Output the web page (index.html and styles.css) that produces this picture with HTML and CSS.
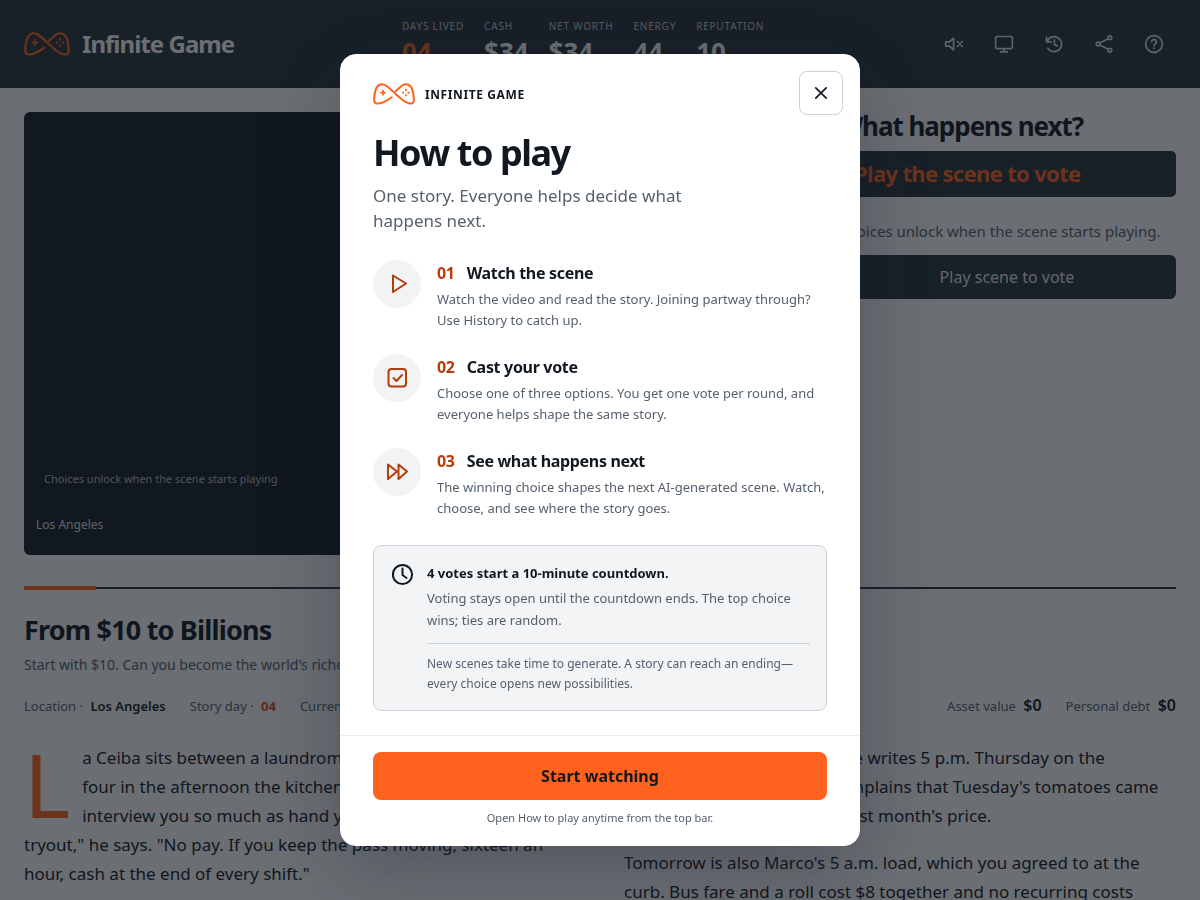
FILE: index.html
```
<!DOCTYPE html>
<html lang="en">
<head>
  <meta charset="UTF-8">
  <meta name="viewport" content="width=device-width, initial-scale=1.0">
  <title>Infinite Game</title>
  <link rel="stylesheet" href="styles.css">
</head>
<body>
  <svg class="sprite" width="0" height="0" aria-hidden="true">
    <symbol id="logo" viewBox="0 0 46 24">
      <g fill="none" stroke="currentColor" stroke-width="2.200" stroke-linecap="round" stroke-linejoin="round">
        <path d="M20.500 15.500C15 19.500 9.500 22.500 5 22.500C1.800 22.500 1 20.500 1.300 16.500C1.700 11 3 6 5 3.500C7.500 0.800 11.500 0.800 14.500 3C20 7 26 13.500 31 17.500C35 20.800 38.500 22.500 41 22.500C44.200 22.500 45 20.500 44.700 16.500C44.300 11 43 6 41 3.500C38.500 0.800 34.500 0.800 31.500 3L25 8.800"/>
        <path d="M11 8v5M8.500 10.500h5" stroke-width="1.800"/>
      </g>
      <g fill="currentColor">
        <circle cx="36" cy="7.500" r="1.200"/><circle cx="36" cy="13.500" r="1.200"/>
        <circle cx="33" cy="10.500" r="1.200"/><circle cx="39" cy="10.500" r="1.200"/>
      </g>
    </symbol>
  </svg>

  <header class="topbar">
    <a class="brand" href="#">
      <svg class="brand-logo" width="46" height="24"><use href="#logo"/></svg>
      <span>Infinite Game</span>
    </a>
    <dl class="stats">
      <div><dt>Days lived</dt><dd class="accent">04</dd></div>
      <div><dt>Cash</dt><dd>$34</dd></div>
      <div><dt>Net worth</dt><dd>$34</dd></div>
      <div><dt>Energy</dt><dd>44</dd></div>
      <div><dt>Reputation</dt><dd>10</dd></div>
    </dl>
    <nav class="tools" aria-label="Tools">
      <button type="button" aria-label="Unmute">
        <svg viewBox="0 0 24 24"><path d="M2 9.500v5h4.500l5 4.500V5l-5 4.500zM16 9l6 6M22 9l-6 6"/></svg>
      </button>
      <button type="button" aria-label="Theater mode">
        <svg viewBox="0 0 24 24"><rect x="2" y="3" width="20" height="14.500" rx="1.500"/><path d="M12 17.500v4M8 21.500h8"/></svg>
      </button>
      <button type="button" aria-label="History">
        <svg viewBox="0 0 24 24"><path d="M3 4v5.500h5.500M3.500 9.500a9 9 0 1 1 1 7.500M12.500 7v5.500l3.500 2"/></svg>
      </button>
      <button type="button" aria-label="Share">
        <svg viewBox="0 0 24 24"><circle cx="19" cy="4.500" r="2.300"/><circle cx="5" cy="12" r="2.300"/><circle cx="19" cy="19.500" r="2.300"/><path d="M7 10.800l10-5.200M7 13.200l10 5.200"/></svg>
      </button>
      <button type="button" aria-label="How to play">
        <svg viewBox="0 0 24 24"><circle cx="12" cy="12" r="10"/><path d="M9.300 9.200a2.800 2.800 0 1 1 4.200 2.500c-1 .600-1.500 1.100-1.500 2.300M12 17v.300"/></svg>
      </button>
    </nav>
  </header>

  <main class="page">
    <div class="stage">
      <section class="video" aria-label="Scene">
        <p class="video-hint">Choices unlock when the scene starts playing</p>
        <p class="video-place">Los Angeles</p>
      </section>
      <aside class="vote">
        <h2>What happens next?</h2>
        <p class="vote-status">Play the scene to vote</p>
        <p class="vote-hint">Choices unlock when the scene starts playing.</p>
        <button class="vote-play" type="button">Play scene to vote</button>
      </aside>
    </div>

    <section class="story">
      <div class="rule"></div>
      <h1>From $10 to Billions</h1>
      <p class="tagline">Start with $10. Can you become the world's richest person?</p>
      <div class="meta">
        <span>Location · <b>Los Angeles</b></span>
        <span>Story day · <b class="accent">04</b></span>
        <span>Current job · <b>None</b></span>
        <span class="money push">Asset value <b>$0</b></span>
        <span class="money">Personal debt <b>$0</b></span>
      </div>
      <div class="prose">
        <div>
          <p class="lead">La Ceiba sits between a laundromat and a tire shop, and by four in the afternoon the kitchen is already loud. They don't interview you so much as hand you an apron. "This is the tryout," he says. "No pay. If you keep the pass moving, sixteen an hour, cash at the end of every shift."</p>
        </div>
        <div>
          <p>At the back of an order slip he writes 5 p.m. Thursday on the calendar margin, then he complains that Tuesday's tomatoes came bruised, and again billed at last month's price.</p>
          <p>Tomorrow is also Marco's 5 a.m. load, which you agreed to at the curb. Bus fare and a roll cost $8 together and no recurring costs through Friday.</p>
        </div>
      </div>
    </section>
  </main>

  <div class="overlay">
    <div class="modal" role="dialog" aria-modal="true" aria-labelledby="howto-title">
      <button class="close" type="button" aria-label="Close">
        <svg width="20" height="20" viewBox="0 0 20 20"><path d="M4.800 4.800l10.400 10.400M15.200 4.800L4.800 15.200"/></svg>
      </button>
      <div class="modal-body">
        <div class="modal-brand">
          <svg class="modal-logo" width="42" height="22"><use href="#logo"/></svg>
          <span>Infinite Game</span>
        </div>
        <h2 id="howto-title">How to play</h2>
        <p class="intro">One story. Everyone helps decide what happens next.</p>

        <ol class="steps">
          <li>
            <span class="step-icon"><svg viewBox="0 0 24 24"><path d="M8 3.500l13 8-13 8.500z"/></svg></span>
            <div>
              <h3><span>01</span>Watch the scene</h3>
              <p>Watch the video and read the story. Joining partway through? Use History to catch up.</p>
            </div>
          </li>
          <li>
            <span class="step-icon"><svg viewBox="0 0 24 24"><rect x="3.500" y="3" width="17.500" height="17.500" rx="3"/><path d="M8.500 12l3 3 5.500-6"/></svg></span>
            <div>
              <h3><span>02</span>Cast your vote</h3>
              <p>Choose one of three options. You get one vote per round, and everyone helps shape the same story.</p>
            </div>
          </li>
          <li>
            <span class="step-icon"><svg viewBox="0 0 24 24"><path d="M3 4.500l9 7-9 7.500zM13.500 4.500l8.500 7-8.500 7.500z"/></svg></span>
            <div>
              <h3><span>03</span>See what happens next</h3>
              <p>The winning choice shapes the next AI-generated scene. Watch, choose, and see where the story goes.</p>
            </div>
          </li>
        </ol>

        <div class="note">
          <svg width="24" height="24" viewBox="0 0 24 24"><circle cx="12.500" cy="12.500" r="9.600"/><path d="M12.500 6.500v6.500l4 3"/></svg>
          <div>
            <strong>4 votes start a 10-minute countdown.</strong>
            <p>Voting stays open until the countdown ends. The top choice wins; ties are random.</p>
            <p class="fine">New scenes take time to generate. A story can reach an ending—every choice opens new possibilities.</p>
          </div>
        </div>
      </div>
      <footer class="modal-foot">
        <button class="start" type="button">Start watching</button>
        <p>Open How to play anytime from the top bar.</p>
      </footer>
    </div>
  </div>
</body>
</html>
```

FILE: styles.css
```
:root {
  --ink: #111820;
  --slate: #27323a;
  --muted: #56616e;
  --orange: #ff621c;
  --rust: #b63c0c;
}

* { box-sizing: border-box; }

body {
  margin: 0;
  height: 100vh;
  overflow: hidden;
  background: #fff;
  color: var(--ink);
  font-family: "Noto Sans", sans-serif;
  font-size: 16px;
}

h1, h2, h3, p, dl, dd, ol { margin: 0; padding: 0; }
button { font: inherit; cursor: pointer; }
.accent { color: var(--orange); }
.sprite { position: absolute; }

/* top bar */
.topbar {
  display: flex;
  align-items: center;
  justify-content: space-between;
  height: 88px;
  padding: 0 24px;
  background: var(--slate);
  color: #fff;
}
.brand {
  display: flex;
  align-items: center;
  gap: 12px;
  color: #fff;
  font-size: 24px;
  font-weight: 700;
  line-height: 32px;
  letter-spacing: -0.04em;
  text-decoration: none;
}
.brand-logo, .modal-logo { color: var(--orange); }
.stats { display: flex; gap: 20px; }
.stats dt {
  color: #c3c8ce;
  font-size: 10px;
  line-height: 16px;
  letter-spacing: 0.08em;
  text-transform: uppercase;
}
.stats dd { font-size: 26px; font-weight: 700; line-height: 36px; }
.tools { display: flex; gap: 6px; }
.tools button {
  display: grid;
  place-items: center;
  width: 44px;
  height: 44px;
  padding: 0;
  border: 0;
  background: none;
  color: #dfe2e5;
}
.tools svg {
  width: 20px;
  height: 20px;
  fill: none;
  stroke: currentColor;
  stroke-width: 2;
  stroke-linecap: round;
  stroke-linejoin: round;
}

/* video and vote panel */
.page { padding: 24px; }
.stage { display: grid; grid-template-columns: 1fr 338px; gap: 26px; }
.video {
  display: flex;
  flex-direction: column;
  justify-content: flex-end;
  aspect-ratio: 16 / 9;
  padding: 20px 12px;
  border-radius: 6px;
  background: #151d25;
  color: #dfe2e5;
}
.video-hint { padding: 0 8px; margin-bottom: 28px; font-size: 11px; line-height: 16px; color: #b5bac0; }
.video-place { font-size: 12px; line-height: 20px; }
.vote h2 { font-size: 26px; line-height: 28px; letter-spacing: -0.04em; margin-bottom: 11px; }
.vote-status {
  padding: 0 16px 2px;
  border-radius: 5px;
  background: var(--slate);
  color: var(--orange);
  font-size: 22px;
  font-weight: 700;
  line-height: 44px;
  letter-spacing: -0.03em;
}
.vote-hint { margin: 22px 0 12px; color: var(--muted); font-size: 15px; line-height: 24px; }
.vote-play {
  width: 100%;
  height: 44px;
  border: 0;
  border-radius: 6px;
  background: var(--slate);
  color: #e6e8ea;
}

/* story */
.story { margin-top: 31px; }
.rule {
  display: flex;
  align-items: center;
  height: 4px;
  background: linear-gradient(var(--slate), var(--slate)) center / 100% 2px no-repeat;
}
.rule::before { content: ""; width: 72px; height: 4px; background: var(--orange); }
.story h1 { margin-top: 22px; font-size: 27px; line-height: 36px; letter-spacing: -0.03em; }
.tagline { margin-top: 6px; color: var(--muted); font-size: 14px; line-height: 22px; }
.meta {
  display: flex;
  align-items: baseline;
  gap: 24px;
  margin-top: 17px;
  color: var(--muted);
  font-size: 13px;
  line-height: 24px;
}
.meta b { margin-left: 4px; color: var(--ink); font-weight: 600; }
.meta b.accent { color: #e04e10; font-weight: 700; }
.meta .money b { font-size: 16px; }
.push { margin-left: auto; }
.prose {
  display: grid;
  grid-template-columns: 1fr 1fr;
  gap: 48px;
  margin-top: 25px;
  font-size: 17px;
  line-height: 29px;
}
.prose p + p { margin-top: 18px; }
.lead::first-letter {
  float: left;
  margin: 5px 12px 0 0;
  color: var(--orange);
  font-size: 88px;
  font-weight: 400;
  line-height: 72px;
}

/* how to play dialog */
.overlay {
  position: fixed;
  inset: 0;
  display: grid;
  place-items: center;
  padding: 16px;
  background: rgba(16, 21, 29, 0.62);
}
.modal {
  position: relative;
  width: 100%;
  max-width: 520px;
  border: 1px solid #fff;
  border-radius: 16px;
  background: #fff;
  box-shadow: 0 24px 80px rgba(16, 24, 40, 0.28);
}
.close {
  position: absolute;
  top: 16px;
  right: 16px;
  display: grid;
  place-items: center;
  width: 44px;
  height: 44px;
  padding: 0;
  border: 1px solid #cdd1d6;
  border-radius: 8px;
  background: #fff;
}
.close svg { fill: none; stroke: var(--ink); stroke-width: 1.700; stroke-linecap: round; }
.modal-body { padding: 24px 32px; }
.modal-brand {
  display: flex;
  align-items: center;
  gap: 10px;
  height: 30px;
  font-size: 12px;
  font-weight: 700;
  letter-spacing: 0.05em;
  text-transform: uppercase;
}
.modal h2 { margin-top: 22px; font-size: 36px; line-height: 44px; letter-spacing: -0.04em; }
.intro { max-width: 340px; margin-top: 8px; color: var(--muted); font-size: 17px; line-height: 25px; }
.steps { display: grid; gap: 23px; margin-top: 27px; list-style: none; }
.steps li { display: flex; gap: 16px; }
.step-icon {
  display: grid;
  place-items: center;
  flex: none;
  width: 48px;
  height: 48px;
  border-radius: 50%;
  background: #f1f3f5;
}
.step-icon svg {
  width: 24px;
  height: 24px;
  fill: none;
  stroke: var(--rust);
  stroke-width: 2;
  stroke-linecap: round;
  stroke-linejoin: round;
}
.steps h3 { display: flex; gap: 12px; font-size: 16px; line-height: 26px; letter-spacing: -0.02em; }
.steps h3 span { color: var(--rust); }
.steps p { margin-top: 3px; color: var(--muted); font-size: 13px; line-height: 21px; }
.note {
  display: flex;
  gap: 13px;
  margin-top: 26px;
  padding: 16px;
  border: 1px solid #cdd2d8;
  border-radius: 8px;
  background: #f2f4f6;
  font-size: 13px;
  line-height: 22px;
}
.note svg {
  flex: none;
  fill: none;
  stroke: var(--ink);
  stroke-width: 2;
  stroke-linecap: round;
  stroke-linejoin: round;
}
.note strong { display: block; margin-bottom: 3px; }
.note p { color: var(--muted); }
.note .fine {
  margin-top: 12px;
  padding-top: 10px;
  border-top: 1px solid #cdd2d8;
  font-size: 12px;
  line-height: 20px;
}
.modal-foot {
  padding: 16px 32px 19px;
  border-top: 1px solid #e9ebed;
  text-align: center;
}
.start {
  width: 100%;
  height: 48px;
  border: 0;
  border-radius: 8px;
  background: var(--orange);
  color: var(--ink);
  font-weight: 700;
}
.modal-foot p { margin-top: 10px; color: var(--muted); font-size: 11px; line-height: 16px; }
```
